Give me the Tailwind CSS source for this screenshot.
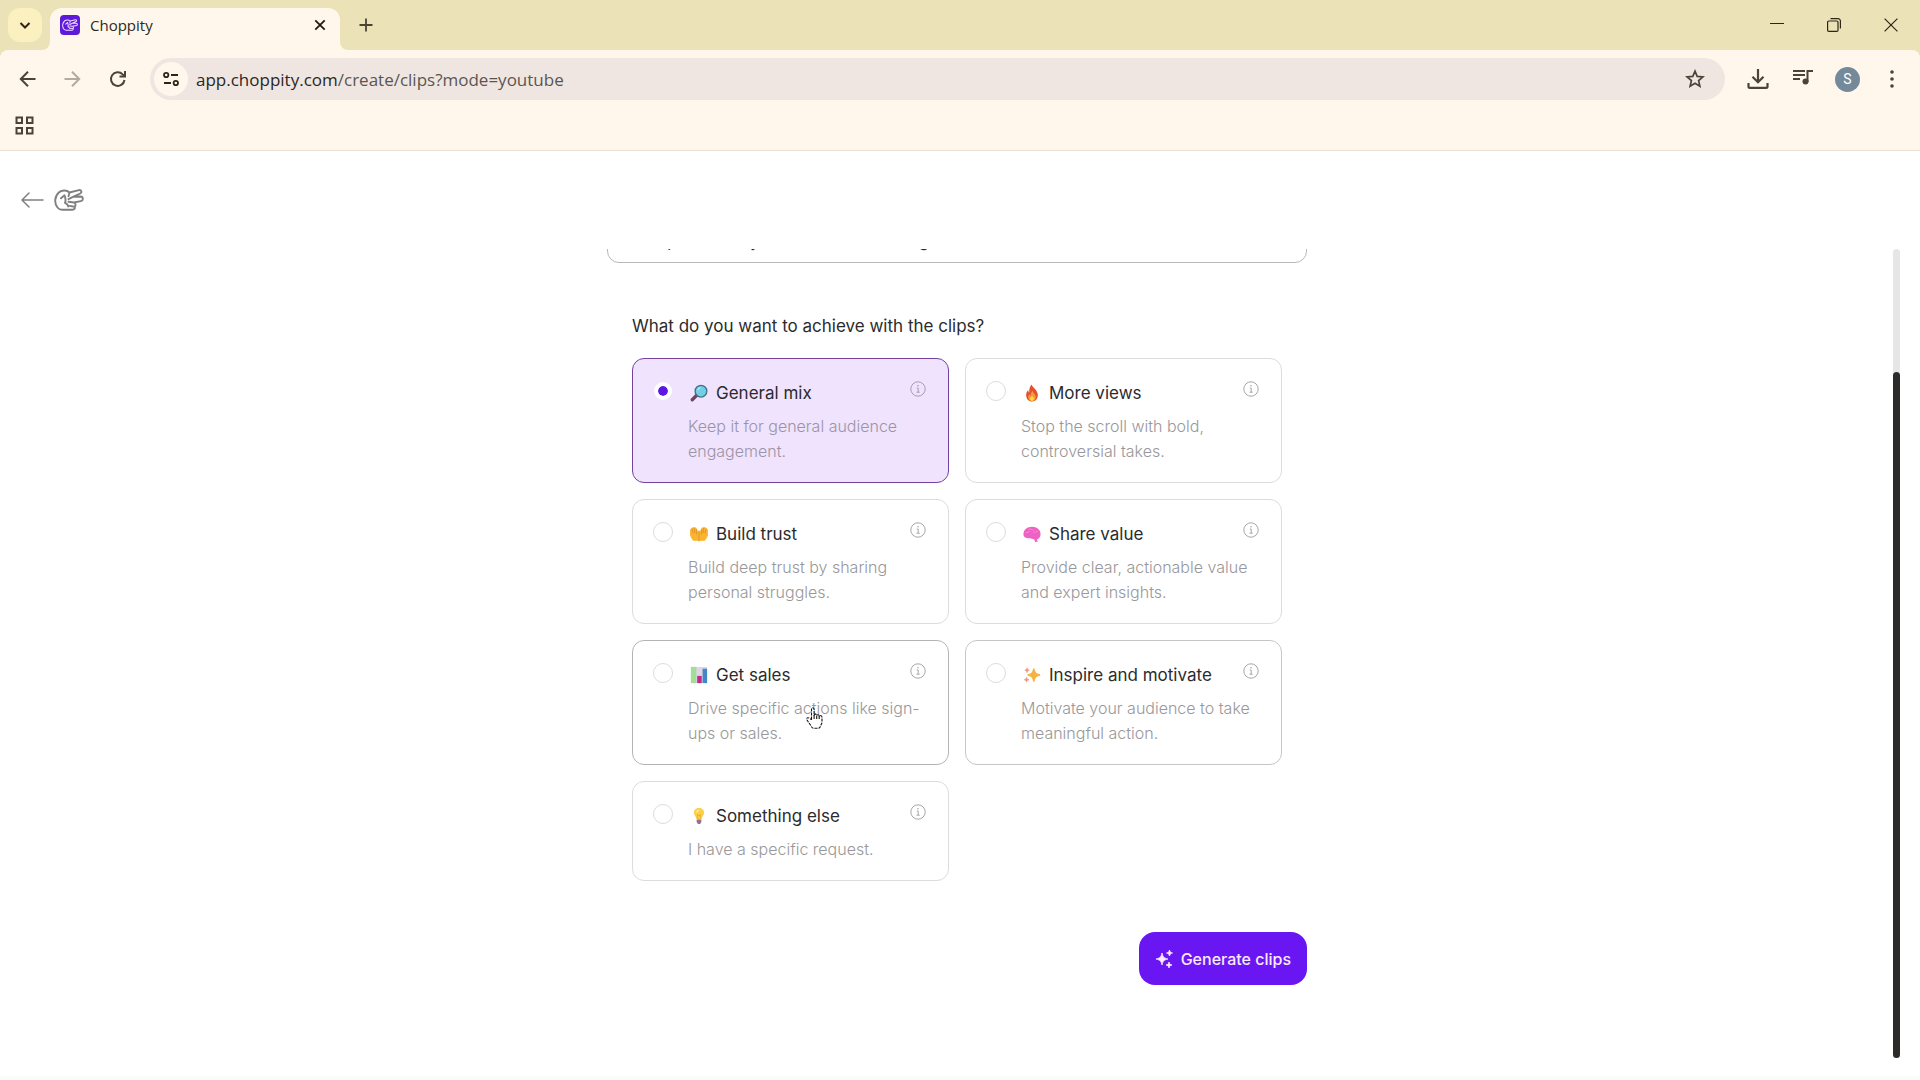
<!DOCTYPE html>
<html lang="en">

<head>
  <meta charset="UTF-8">
  <title>Choppity</title>
  <meta name="viewport" content="width=device-width, initial-scale=1.0">
  <script src="https://cdn.jsdelivr.net/npm/@tailwindcss/browser@4"></script>
</head>

<body class="h-screen flex flex-col overflow-hidden bg-white text-[#2b2b2e] font-['Inter',sans-serif]">
  <!-- Shared icons -->
  <svg class="hidden">
    <symbol id="info" viewBox="0 0 16 16">
      <circle cx="8" cy="8" r="7.2" fill="none" stroke="currentColor" />
      <path d="M6.800 7h1.400v4.200M6.500 11.200h3.200" fill="none" stroke="currentColor" />
      <circle cx="8" cy="4.7" r=".8" fill="currentColor" />
    </symbol>
    <symbol id="hand" viewBox="0 0 30 22">
      <path d="M15.500 3.500C13 1 8 .6 4.800 3.500.4 7.500.2 14.500 3.500 18.500c1.300 1.600 2.500 2.200 4.500 2.200h10.500c2 0 2.800-1.400 2-3M14.500 7.200 15.500 3.500l9.500-2.400c2.400-.5 3.300 2.400 1.200 3.400l-6.700 3.200M19.500 7.700l7-.2c3 0 3.200 4 .4 4.600l-6.900 1.400c1.800.3 2 3.700.5 4.200M19.500 7.700l-5 2.500M20 13.500l-5.500-.8M20.500 17.700l-5-.8M7 9.300l3.500-3c1 2.500 1.500 5 .5 7.500 2 .8 3 2 3.200 3.700" fill="none" stroke="currentColor" stroke-width="1.900" stroke-linecap="round" stroke-linejoin="round" />
    </symbol>
  </svg>

  <header class="bg-[#ebe2b8] text-[#4a4336] font-['Open_Sans',sans-serif]">
    <!-- Tab strip -->
    <div class="h-[50px] flex items-end pl-2">
      <button class="size-[34px] mb-2 rounded-xl bg-[#faf0c0] text-[#2c2617] flex items-center justify-center" aria-label="Search tabs">
        <svg class="size-4" viewBox="0 0 16 16" fill="none" stroke="currentColor" stroke-width="2"><path d="M3.500 6 8 10.500 12.500 6" /></svg>
      </button>
      <svg class="size-2" viewBox="0 0 8 8"><path d="M8 0v8H0a8 8 0 0 0 8-8" fill="#fff7eb" /></svg>
      <div class="w-[290px] h-[42px] rounded-t-xl bg-[#fff7eb] flex items-center pl-2.5 pr-3 pb-2">
        <span class="size-5 mr-2.5 rounded bg-[#5d1bd8] text-[#f3dcff] flex items-center justify-center">
          <svg class="w-4 h-3"><use href="#hand" /></svg>
        </span>
        <span class="flex-1 text-[15px] text-[#2d2a24]">Choppity</span>
        <button class="size-4 text-[#1f1b12]" aria-label="Close tab">
          <svg viewBox="0 0 16 16" stroke="currentColor" stroke-width="1.800"><path d="m3.300 3.300 9.400 9.400M12.700 3.300l-9.400 9.400" /></svg>
        </button>
      </div>
      <svg class="size-2" viewBox="0 0 8 8"><path d="M0 0v8h8a8 8 0 0 1-8-8" fill="#fff7eb" /></svg>
      <button class="size-4 ml-2.5 mb-[17px]" aria-label="New tab">
        <svg viewBox="0 0 16 16" stroke="currentColor" stroke-width="1.800"><path d="M8 1.500v13M1.500 8h13" /></svg>
      </button>
      <div class="ml-auto mb-[18px] pr-[22px] flex gap-[43px] text-[#2c2617]">
        <button class="size-3.5" aria-label="Minimize"><svg viewBox="0 0 14 14" stroke="currentColor"><path d="M0 5.500h14" /></svg></button>
        <button class="size-3.5" aria-label="Restore"><svg viewBox="0 0 14 14" fill="none" stroke="currentColor" stroke-width="1.200"><rect x=".6" y="3" width="10.400" height="10.400" rx="1.200" /><path d="M3.500.7h7.500a2.400 2.400 0 0 1 2.400 2.400v7.500" /></svg></button>
        <button class="size-3.5" aria-label="Close"><svg viewBox="0 0 14 14" stroke="currentColor" stroke-width="1.200"><path d="m.6.6 12.800 12.800M13.400.6.600 13.400" /></svg></button>
      </div>
    </div>

    <div class="rounded-t-lg bg-[#fff7eb] border-b border-[#ece1d4]">
      <!-- Toolbar -->
      <div class="h-[58px] flex items-center pl-[18px] pr-[18px]">
        <button class="size-5" aria-label="Back">
          <svg viewBox="0 0 20 20" fill="none" stroke="currentColor" stroke-width="2"><path d="M17.500 10H3M10 2.800 2.800 10l7.200 7.200" /></svg>
        </button>
        <button class="size-5 ml-6 text-[#b3aba0]" aria-label="Forward">
          <svg viewBox="0 0 20 20" fill="none" stroke="currentColor" stroke-width="2"><path d="M2.500 10H17M10 2.800l7.200 7.200-7.200 7.200" /></svg>
        </button>
        <button class="size-5 ml-[26px]" aria-label="Reload">
          <svg viewBox="0 0 20 20" fill="none" stroke="currentColor" stroke-width="2"><path d="M16.500 11a6.800 6.800 0 1 1-1.800-5.600L17 7.500" /><path d="M17 2v5.500h-5.500" /></svg>
        </button>
        <div class="flex-1 h-[42px] ml-[22px] mr-[22px] pl-1 pr-5 rounded-full bg-[#efe6e2] flex items-center">
          <button class="size-[34px] rounded-full bg-[#fff7eb] text-[#2c2617] flex items-center justify-center" aria-label="Site information">
            <svg class="size-[18px]" viewBox="0 0 18 18" fill="none" stroke="currentColor" stroke-width="1.800"><circle cx="4.200" cy="5" r="2.200" /><path d="M9 5h7M2 13h7" /><circle cx="13.800" cy="13" r="2.200" /></svg>
          </button>
          <p class="flex-1 ml-2 pt-0.5 text-[17px] text-[#5c5550]"><span class="text-[#2b2724]">app.choppity.com</span>/create/clips?mode=youtube</p>
          <button class="size-5" aria-label="Bookmark this tab">
            <svg viewBox="0 0 20 20" fill="none" stroke="currentColor" stroke-width="1.700"><path d="m10 2.200 2.200 5.200 5.700.5-4.300 3.700 1.300 5.600-4.900-3-4.900 3 1.300-5.600L2.100 7.900l5.700-.5z" /></svg>
          </button>
        </div>
        <div class="flex items-center">
          <button class="w-[22px] h-5" aria-label="Downloads">
            <svg viewBox="0 0 22 20" fill="none" stroke="currentColor" stroke-width="2.200"><path d="M11 0v13M5.500 7.800 11 13.300l5.500-5.500M1.500 14v3.400c0 .8.6 1.400 1.400 1.400h16.200c.8 0 1.400-.6 1.400-1.400V14" /></svg>
          </button>
          <button class="size-5 ml-6 mb-1" aria-label="Media controls">
            <svg viewBox="0 0 20 20" fill="none" stroke="currentColor" stroke-width="2"><path d="M0 4h12M0 8h12M0 12h7M14.500 15V4H20" /><circle cx="12.500" cy="14.500" r="3" fill="currentColor" stroke="none" /></svg>
          </button>
          <button class="size-[25px] ml-[22px] rounded-full bg-[#74899a] text-white text-[14px] font-['Roboto',sans-serif]" aria-label="Profile">S</button>
          <button class="size-5 ml-[22px]" aria-label="Menu">
            <svg viewBox="0 0 20 20" fill="currentColor"><circle cx="10" cy="3" r="1.800" /><circle cx="10" cy="10" r="1.800" /><circle cx="10" cy="17" r="1.800" /></svg>
          </button>
        </div>
      </div>
      <!-- Bookmarks bar -->
      <div class="h-[42px] pl-[15px] pt-2">
        <button class="size-[19px]" aria-label="Apps">
          <svg viewBox="0 0 19 19" fill="none" stroke="currentColor" stroke-width="2"><path d="M1.500 1.500h5.500v5.500h-5.500zM12 1.500h5.500v5.500H12zM1.500 12h5.500v5.500h-5.500zM12 12h5.500v5.500H12z" /></svg>
        </button>
      </div>
    </div>
  </header>

  <nav class="h-[98px] pl-[21px] flex items-center text-[#808080]">
    <a href="#" aria-label="Go back">
      <svg class="w-[23px] h-4" viewBox="0 0 23 16" fill="none" stroke="currentColor" stroke-width="1.500" stroke-linecap="round" stroke-linejoin="round"><path d="M22 8H1M8 1 1 8l7 7" /></svg>
    </a>
    <a href="#" class="ml-2.5" aria-label="Choppity home">
      <svg class="w-[30px] h-[22px]"><use href="#hand" /></svg>
    </a>
  </nav>

  <main class="flex-1 min-h-0 flex overflow-hidden border-b-4 border-[#f8fdfc]">
    <form class="flex-1 pl-[21px]">
      <div class="w-[700px] mx-auto">
        <input type="text" aria-label="Clip instructions" value="Example: Find my best bits when talking" class="block w-full h-12 -mt-[34px] px-[18px] pt-1 rounded-xl border border-[#b9b9bb] text-base">

        <fieldset class="mx-[25px] mt-[50px]">
          <legend class="text-[17px] leading-[27px]">What do you want to achieve with the clips?</legend>
          <div class="mt-[18px] grid grid-cols-2 gap-4">
            <label class="flex items-start rounded-xl border border-[#74419f] bg-[#efe3fd] pt-5 pb-[18px] pl-5 pr-[22px]">
              <input type="radio" name="goal" checked class="appearance-none shrink-0 mt-0.5 size-5 rounded-full border border-[#dcdcde] bg-white checked:mt-[3px] checked:mx-px checked:size-[18px] checked:border-4 checked:border-white checked:bg-[#5c17e6] bg-clip-padding">
              <span class="flex-1 ml-[15px] -mr-6">
                <span class="flex items-center gap-2 pl-0.5 text-[17px] leading-7">
                  <svg class="size-[18px]" viewBox="0 0 20 20"><path d="m2.500 17.500 5-5" stroke="#75405f" stroke-width="3.600" stroke-linecap="round" /><circle cx="12.200" cy="8" r="6.500" fill="#6fcfe3" stroke="#44708a" stroke-width="1.500" /><path d="M8.500 7a4 4 0 0 1 3-3" fill="none" stroke="#b6eef5" stroke-width="1.200" /></svg>
                  General mix
                </span>
                <span class="block mt-[7px] text-base leading-[25px] font-light text-[#9c93a8]">Keep it for general audience<br>engagement.</span>
              </span>
              <svg class="shrink-0 size-4 mt-0.5 text-[#a79bb5]"><use href="#info" /></svg>
            </label>

            <label class="flex items-start rounded-xl border border-[#dcdcde] pt-5 pb-[18px] pl-5 pr-[22px]">
              <input type="radio" name="goal" class="appearance-none shrink-0 mt-0.5 size-5 rounded-full border border-[#dcdcde] bg-white">
              <span class="flex-1 ml-[15px] -mr-6">
                <span class="flex items-center gap-2 pl-0.5 text-[17px] leading-7">
                  <svg class="size-[18px]" viewBox="0 0 20 20"><path d="M9.500.5c1 3.500 7 6 7 11.800 0 4.200-2.800 7.200-6.500 7.200s-6.500-2.800-6.500-7c0-2.700 1-4.500 2.200-5.800.1 1.500.5 2.300 1.300 2.800C6.600 6 7.500 3 9.500.5" fill="#e2522f" /><path d="M10.500 7.500c.8 3 3.700 4 3.700 7.200 0 2.600-1.900 4.300-4.200 4.300s-4.200-1.700-4.200-4.200c0-1.500.9-2.600 1.700-3.300.2 1 .6 1.400 1.200 1.600-.2-2.200.8-4 1.800-5.600" fill="#fb9a35" /><path d="M10 13c.4 1 2.200 1.700 2.200 3.500 0 1.400-1 2.300-2.200 2.300s-2.200-.9-2.200-2.300c0-1.500 1.400-2.200 2.200-3.500" fill="#ffd84c" /></svg>
                  More views
                </span>
                <span class="block mt-[7px] text-base leading-[25px] font-light text-[#98989b]">Stop the scroll with bold,<br>controversial takes.</span>
              </span>
              <svg class="shrink-0 size-4 mt-0.5 text-[#a6a6a9]"><use href="#info" /></svg>
            </label>

            <label class="flex items-start rounded-xl border border-[#dcdcde] pt-5 pb-[18px] pl-5 pr-[22px]">
              <input type="radio" name="goal" class="appearance-none shrink-0 mt-0.5 size-5 rounded-full border border-[#dcdcde] bg-white">
              <span class="flex-1 ml-[15px] -mr-6">
                <span class="flex items-center gap-2 pl-0.5 text-[17px] leading-7">
                  <svg class="size-[18px]" viewBox="0 0 20 20"><path d="M9.600 17H4C2 15 .3 12 .3 8.500L1 4.800 3.500 3l3 .5L8 6.500l1.600 1.500zM10.400 17H16c2-2 3.700-5 3.700-8.500L19 4.800 16.500 3l-3 .5L12 6.500 10.400 8z" fill="#fbb42f" stroke="#fbb42f" stroke-width="1.200" stroke-linejoin="round" /><path d="M10 6.500V18M2.300 4.500l1 4.500M4.700 3.500l.6 5M7 5l.2 5M17.700 4.500l-1 4.500M15.300 3.500l-.6 5M13 5l-.2 5" fill="none" stroke="#d98a24" stroke-width=".8" stroke-linecap="round" /></svg>
                  Build trust
                </span>
                <span class="block mt-[7px] text-base leading-[25px] font-light text-[#98989b]">Build deep trust by sharing<br>personal struggles.</span>
              </span>
              <svg class="shrink-0 size-4 mt-0.5 text-[#a6a6a9]"><use href="#info" /></svg>
            </label>

            <label class="flex items-start rounded-xl border border-[#dcdcde] pt-5 pb-[18px] pl-5 pr-[22px]">
              <input type="radio" name="goal" class="appearance-none shrink-0 mt-0.5 size-5 rounded-full border border-[#dcdcde] bg-white">
              <span class="flex-1 ml-[15px] -mr-6">
                <span class="flex items-center gap-2 pl-0.5 text-[17px] leading-7">
                  <svg class="size-[18px]" viewBox="0 0 20 20"><path d="M.5 10.500C.5 5 5 2 10 2c5.500 0 9.500 3.500 9.500 8 0 3-1.500 5.500-4 6l.8 2.700-2.600.2-1.400-3.200c-2.300-.2-3.300-1-4.800-1-4.300.3-7-1.200-7-4.200" fill="#ee62c4" /><path d="M3.500 8.500c1.500-1 3 0 4-1.500M7 4.500c1.500.5 3.500 0 4.500 1.500M12 8c1.500-.5 3 0 4-1" fill="none" stroke="#f590d6" stroke-width="1" stroke-linecap="round" /></svg>
                  Share value
                </span>
                <span class="block mt-[7px] text-base leading-[25px] font-light text-[#98989b]">Provide clear, actionable value<br>and expert insights.</span>
              </span>
              <svg class="shrink-0 size-4 mt-0.5 text-[#a6a6a9]"><use href="#info" /></svg>
            </label>

            <!-- Hovered option -->
            <label class="relative flex items-start rounded-xl border border-[#b4b4b6] pt-5 pb-[18px] pl-5 pr-[22px]">
              <input type="radio" name="goal" class="appearance-none shrink-0 mt-0.5 size-5 rounded-full border border-[#dcdcde] bg-white">
              <span class="flex-1 ml-[15px] -mr-6">
                <span class="flex items-center gap-2 pl-0.5 text-[17px] leading-7">
                  <svg class="size-[18px]" viewBox="0 0 20 20"><rect x="1" y="1" width="18" height="18" fill="#dfd5e4" /><rect x="1" y="1" width="6" height="18" fill="#9fdf98" /><rect x="8" y="11" width="5" height="8" fill="#c22a86" /><rect x="14" y="3" width="5" height="16" fill="#4288c4" /></svg>
                  Get sales
                </span>
                <span class="block mt-[7px] text-base leading-[25px] font-light text-[#98989b]">Drive specific actions like sign-<br>ups or sales.</span>
              </span>
              <svg class="shrink-0 size-4 mt-0.5 text-[#a6a6a9]"><use href="#info" /></svg>
              <svg class="absolute left-[173px] top-[66px] w-[17px] h-[22px]" viewBox="0 0 17 22" fill="#fff" stroke="#111" stroke-width="1.100" stroke-linejoin="round"><path d="M5.500 12.500v-10c0-2.200 2.600-2.200 2.600 0v5.700c.3-1.400 2.500-1.200 2.600.3.400-1.200 2.400-1 2.500.5.500-1 2.800-.8 2.800 1.500v4.500c0 2-1.300 3-1.700 4.500-.4 1.300-.8 1.800-2 1.800H7.500c-1.300 0-1.800-1.300-2.700-2.800L1 13c-1-1.800.8-3 2.300-1.800z" stroke-dasharray="3 1" /><path d="M8.100 8v4M10.700 8.500V12M13.200 9v3" /></svg>
            </label>

            <label class="flex items-start rounded-xl border border-[#c6c6c8] pt-5 pb-[18px] pl-5 pr-[22px]">
              <input type="radio" name="goal" class="appearance-none shrink-0 mt-0.5 size-5 rounded-full border border-[#dcdcde] bg-white">
              <span class="flex-1 ml-[15px] -mr-6">
                <span class="flex items-center gap-2 pl-0.5 text-[17px] leading-7">
                  <svg class="size-[18px]" viewBox="0 0 20 20"><path d="M12 3c.9 4.500 2 5.800 6.500 7-4.500 1.200-5.600 2.500-6.500 7-.9-4.500-2-5.800-6.500-7C10 8.800 11.100 7.500 12 3" fill="#f5b340" stroke="#f5b340" stroke-width="1.500" stroke-linejoin="round" /><path d="M4.500 2c.4 1.800.8 2.200 2.500 2.700-1.700.5-2.100.9-2.500 2.700C4.100 5.600 3.700 5.200 2 4.700c1.700-.5 2.100-.9 2.500-2.700M4 12.500c.4 1.800.9 2.300 2.700 2.800C4.900 15.800 4.400 16.200 4 18c-.4-1.800-.9-2.200-2.700-2.700 1.800-.5 2.300-1 2.700-2.800" fill="#e9967a" stroke="#e9967a" stroke-width=".7" /></svg>
                  Inspire and motivate
                </span>
                <span class="block mt-[7px] text-base leading-[25px] font-light text-[#98989b]">Motivate your audience to take<br>meaningful action.</span>
              </span>
              <svg class="shrink-0 size-4 mt-0.5 text-[#a6a6a9]"><use href="#info" /></svg>
            </label>

            <label class="flex items-start rounded-xl border border-[#dcdcde] pt-5 pb-[18px] pl-5 pr-[22px]">
              <input type="radio" name="goal" class="appearance-none shrink-0 mt-0.5 size-5 rounded-full border border-[#dcdcde] bg-white">
              <span class="flex-1 ml-[15px] -mr-6">
                <span class="flex items-center gap-2 pl-0.5 text-[17px] leading-7">
                  <svg class="size-[18px]" viewBox="0 0 20 20"><path d="M10 1c3.400 0 5.700 2.200 5.700 5.500 0 2.800-2.300 3.800-2.900 7H7.200c-.6-3.200-2.900-4.200-2.900-7C4.300 3.200 6.600 1 10 1" fill="#fbd148" /><path d="M7.500 5.500c.4-1 1-1.600 2-1.800" fill="none" stroke="#fff0b0" stroke-width="1.300" stroke-linecap="round" /><path d="M8.800 13.500 8.200 8.500l1.800 1 1.800-1-.6 5" fill="none" stroke="#e9a02c" stroke-width=".8" /><path d="M7.400 13.800h5.200v3L11.200 19H8.800l-1.400-2.200z" fill="#94708c" /></svg>
                  Something else
                </span>
                <span class="block mt-[7px] text-base leading-[25px] font-light text-[#98989b]">I have a specific request.</span>
              </span>
              <svg class="shrink-0 size-4 mt-0.5 text-[#a6a6a9]"><use href="#info" /></svg>
            </label>
          </div>
        </fieldset>

        <div class="mt-[51px] flex justify-end">
          <button type="button" class="h-[53px] px-4 rounded-2xl bg-[#6a16f3] text-[#fbeaff] text-base font-medium flex items-center gap-2">
            <svg class="size-[18px]" viewBox="0 0 18 18" fill="currentColor"><path d="M7 3c.9 4 2 5.100 6 6-4 .9-5.100 2-6 6-.9-4-2-5.100-6-6 4-.9 5.100-2 6-6M14.500 0c.5 2 1 2.500 3 3-2 .5-2.500 1-3 3-.5-2-1-2.500-3-3 2-.5 2.500-1 3-3M14 12c.5 2 1 2.500 3 3-2 .5-2.500 1-3 3-.5-2-1-2.500-3-3 2-.5 2.500-1 3-3" stroke="currentColor" stroke-width=".8" /></svg>
            Generate clips
          </button>
        </div>
      </div>
    </form>

    <!-- Scrollbar -->
    <div class="w-[7px] mr-5 mb-[18px] pt-[123px] rounded-full bg-[#e6e6e6]">
      <div class="h-full rounded-full bg-[#2c2b29]"></div>
    </div>
  </main>
</body>

</html>
